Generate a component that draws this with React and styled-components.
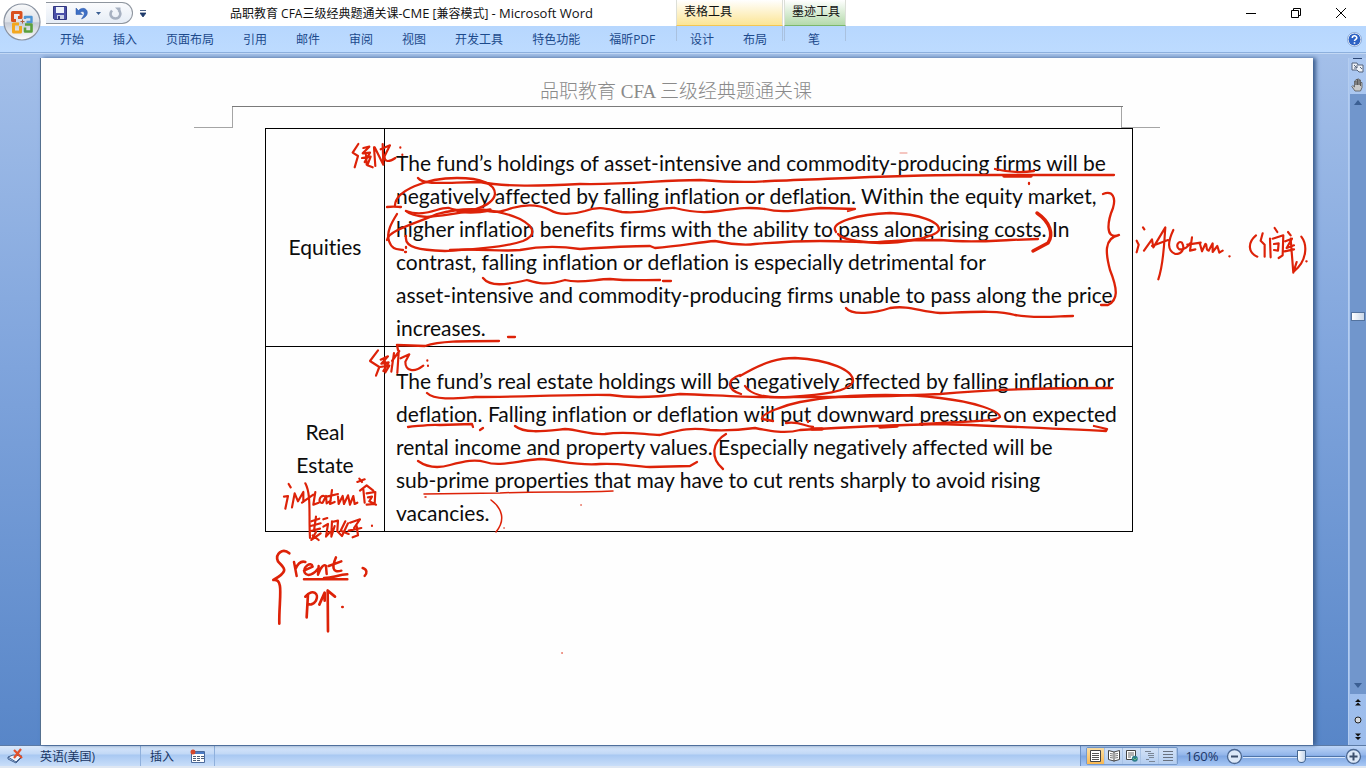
import React from 'react'
import styled, { createGlobalStyle } from 'styled-components'

const GlobalStyle = createGlobalStyle`
* {
  box-sizing: border-box;
}
body {
  margin: 0;
  background: #fff;
  font-family: "Open Sans", "Noto Sans CJK SC", sans-serif;
  font-size: 12px;
}
button {
  border: 0;
  padding: 0;
  background: transparent;
  font: inherit;
  color: inherit;
}
svg {
  display: block;
}
`

const Window = styled.div`
display: flex;
flex-direction: column;
min-height: 100vh;
overflow: hidden;
`

/* ---------- ribbon ---------- */

const Header = styled.header`
display: grid;
grid-template-columns: 46px 630px 107px 1px 62px 1fr;
grid-template-rows: 26px 26px;
background: linear-gradient(#fff 26px, #b7d7fe 26px, #bddbff 100%);
`
const OfficeButton = styled.button`
grid-row: 1 / 3;
padding: 2px 0 0 2px;
align-self: start;
`
const TitleArea = styled.div`
display: flex;
align-items: center;
`
const QuickAccess = styled.div`
display: flex;
align-items: center;
gap: 8px;
width: 87px;
height: 22px;
padding-left: 7px;
border: 1px solid #8e959e;
border-left: 0;
border-radius: 0 11px 11px 0;
background: linear-gradient(#fafbfd, #e6edf6);
`
const MoreButton = styled.button`
margin-left: 7px;
`
const Title = styled.h1`
margin: 0 0 0 84px;
font-size: 12px;
font-weight: 400;
line-height: 26px;
color: #111;
white-space: nowrap;
`
const AppName = styled.span`
font-size: 13px;
`
const ContextLabel = styled.div`
padding-left: 7px;
line-height: 24px;
color: #111;
white-space: nowrap;
border-left: 1px solid #dcdfd8;
border-right: 1px solid #dcdfd8;
border-bottom: 1px solid ${p => p.$edge};
background: linear-gradient(#fff, ${p => p.$tint});
`
const Gap = styled.span``
const WindowButtons = styled.div`
display: flex;
justify-content: flex-end;
align-items: center;
gap: 35px;
padding-right: 20px;
`
const Tabs = styled.nav`
display: flex;
gap: 29px;
padding-left: 14px;
`
const ContextTabs = styled(Tabs)`
padding-left: ${p => p.$pad}px;
border-left: 1px solid #a9c1df;
border-right: 1px solid #a9c1df;
margin-bottom: 11px;
`
const Tab = styled.button`
height: 28px;
line-height: 28px;
color: #1c4a8c;
white-space: nowrap;
`
const HelpArea = styled.div`
display: flex;
justify-content: flex-end;
align-items: center;
padding-right: 4px;
`
const RibbonEdge = styled.div`
height: 6px;
border-top: 1px solid #8db0dd;
background: linear-gradient(#c3d8f4 1px, #a4c0e9 1px);
`

/* ---------- document ---------- */

const Workspace = styled.main`
flex: 1;
display: flex;
background: linear-gradient(#a3bfe9, #7fa4dc 45%, #5886c8);
`
const Sheet = styled.article`
position: relative;
flex: 1;
margin: 0 35px 0 40px;
background: #fefefe;
border-left: 1px solid #55708f;
box-shadow: 3px 0 4px #3d5f8f;
`
const PageHeader = styled.p`
margin: 0 190px 0 191px;
padding: 21px 3px 2px 0;
border-bottom: 1px solid #7a7a7a;
text-align: center;
font-family: "Liberation Serif", "Noto Sans CJK SC", serif;
font-size: 19px;
font-weight: 300;
line-height: 25px;
color: #8a8a8a;
`
const Corners = styled.div`
display: flex;
justify-content: space-between;
padding: 0 153px;
`
const Corner = styled.i`
width: 39px;
height: 21px;
border: solid #a5a5a5;
border-width: ${p => (p.$right ? '0 0 1px 1px' : '0 1px 1px 0')};
`
const TableWrap = styled.div`
padding: 0 180px 0 224px;
`
const DocTable = styled.table`
width: 100%;
table-layout: fixed;
border-collapse: collapse;
font-family: Lato, sans-serif;
font-size: 21px;
font-variant-ligatures: none;
line-height: 33px;
color: #0c0c0c;
`
const RowName = styled.th`
width: 119px;
padding: 17px 12px 0;
border: 1px solid #000;
font-weight: 400;
text-align: center;
`
const RowText = styled.td`
padding: 17px 0 2px 11px;
border: 1px solid #000;
white-space: nowrap;
`
const Ink = styled.svg`
position: absolute;
top: 0;
left: -1px;
pointer-events: none;
fill: none;
stroke: #dd2208;
stroke-width: 2.3px;
stroke-linecap: round;
stroke-linejoin: round;
`

const ScrollColumn = styled.aside`
display: flex;
flex-direction: column;
align-items: center;
width: 18px;
border-left: 1px solid #b4cdf0;
background: linear-gradient(#abc7f0, #9dbdec);
`
const ScrollButton = styled.button`
display: grid;
place-items: center;
width: 17px;
height: ${p => p.$h || 17}px;
`
const Track = styled.div`
flex: 1;
display: flex;
flex-direction: column;
width: 16px;
background: #7196cc;
`
const Spring = styled.div`
flex: ${p => p.$n};
`
const Thumb = styled.div`
height: 9px;
margin: 0 1px;
border: 1px solid #54739f;
background: linear-gradient(90deg, #fff, #c9d6e8);
`

/* ---------- status bar ---------- */

const StatusBar = styled.footer`
display: flex;
align-items: center;
height: 23px;
border-top: 1px solid #5c7ba6;
border-bottom: 2px solid #dfe7f2;
background: linear-gradient(#dbe9fb, #c1d8f6 40%, #a8c8f2 45%, #c9def9);
color: #17355f;
`
const StatusItem = styled.button`
display: flex;
align-items: center;
gap: 16px;
height: 20px;
padding: 0 ${p => p.$right || 9}px 0 ${p => p.$left || 7}px;
border-right: ${p => (p.$line ? '1px solid #8fb0dc' : '0')};
color: #1a3663;
`
const StatusRight = styled.div`
display: flex;
align-items: center;
height: 20px;
margin-left: auto;
padding-left: 5px;
border-left: 1px solid #6d92c6;
background: linear-gradient(#bdd5f7, #92b5ea 45%, #7ea6e2 50%, #a8c8f5);
`
const Views = styled.div`
display: flex;
height: 18px;
border: 1px solid #7699cb;
border-radius: 2px;
`
const ViewButton = styled.button`
display: grid;
place-items: center;
width: 18px;
background: ${p => (p.$active ? 'linear-gradient(#fce0a4, #f9b851)' : 'linear-gradient(#d4e3f7, #b3cdf0)')};
border-right: 1px solid #a9c3e6;
`
const ZoomLabel = styled.button`
width: 48px;
font-size: 13px;
color: #1c3768;
`
const ZoomRange = styled.input`
appearance: none;
width: 102px;
height: 17px;
margin: 0;
background: linear-gradient(transparent 8px, #4f74a9 8px, #4f74a9 9px, #d7e6fb 9px, #d7e6fb 10px, transparent 10px);

&::-webkit-slider-thumb {
  appearance: none;
  width: 9px;
  height: 13px;
  border: 1px solid #44658f;
  border-radius: 1px 1px 5px 5px;
  background: linear-gradient(90deg, #fff, #c6d6ec);
}
`
const RoundButton = styled.button`
padding: 0 ${p => p.$end || 0}px 0 0;
`

const tabs = ['开始', '插入', '页面布局', '引用', '邮件', '审阅', '视图', '开发工具', '特色功能', '福昕PDF']

const OfficeLogo = () => (
  <svg width="42" height="42" viewBox="0 0 42 42">
    <defs>
      <linearGradient id="orb" x1="0" y1="0" x2="0" y2="1">
        <stop offset="0" stopColor="#f9fafb" />
        <stop offset=".5" stopColor="#dde1e8" />
        <stop offset=".52" stopColor="#c4cad5" />
        <stop offset="1" stopColor="#fff" />
      </linearGradient>
    </defs>
    <circle cx="20" cy="20" r="18" fill="url(#orb)" stroke="#8a93a1" strokeWidth="1.2" />
    <g fill="none" strokeWidth="3" strokeLinejoin="round">
      <path d="M14 18.500h-3.500v-8h8.500v5h-3" stroke="#d9501e" />
      <path d="M23 17v-2h6.500v5h-5" stroke="#4f95d4" strokeWidth="2.400" />
      <path d="M17 22h-5.500v8h7v-6" stroke="#f3a71f" />
      <path d="M23 22.500h6.500v7h-6.500v-4" stroke="#5ba03c" strokeWidth="2.600" />
    </g>
    <path d="M20.500 17.500v4M18.500 19.500h4" stroke="#b05f3b" strokeWidth="1" />
  </svg>
)

const SaveIcon = () => (
  <svg width="14" height="14" viewBox="0 0 14 14">
    <path d="M.5.5h13v13h-12l-1-1z" fill="#4a50a8" stroke="#31367f" />
    <path d="M3 1h8v6H3z" fill="#eef3fb" />
    <path d="M4 9h7v4H4z" fill="#c9d1e6" />
    <path d="M5 10h2v3H5z" fill="#31367f" />
  </svg>
)

const UndoIcon = () => (
  <svg width="13" height="13" viewBox="0 0 13 13">
    <path d="M1 1v6.500h6.500L5 5.500c3-2 5-.500 4 2.500L6.500 12c5.500-2 7-6 5-9C9.500.500 6 1 3.500 3.500z" fill="#3e70c6" stroke="#2a55a4" strokeWidth=".5" />
  </svg>
)

const RedoIcon = () => (
  <svg width="13" height="13" viewBox="0 0 13 13">
    <path d="M3 3.500C0 7 2 11.500 6.500 11.500S13 6 9.500 3" fill="none" stroke="#a7b1c1" strokeWidth="2.600" />
    <path d="M6 .5h5.500V6z" fill="#a7b1c1" />
  </svg>
)

const Triangle = ({ up, color = '#3b5f93', w = 8 }) => (
  <svg width={w} height="5" viewBox="0 0 8 5">
    <path d={up ? 'M0 5l4-5 4 5z' : 'M0 0l4 5 4-5z'} fill={color} />
  </svg>
)

const HelpIcon = () => (
  <svg width="15" height="15" viewBox="0 0 15 15">
    <circle cx="7.5" cy="7.5" r="6.500" fill="#2d62c4" stroke="#fff" strokeWidth="1" />
    <circle cx="7.5" cy="7.5" r="7" fill="none" stroke="#5c7fb8" strokeWidth=".6" />
    <path d="M5.300 6c0-3 4.500-2.800 4.500-.3C9.800 7.300 7.500 7.300 7.500 9M7.500 10.300v1.500" fill="none" stroke="#fff" strokeWidth="1.600" />
  </svg>
)

const ZoomSign = ({ plus }) => (
  <svg width="17" height="17" viewBox="0 0 17 17">
    <circle cx="8.500" cy="8.500" r="7" fill="#dce8f8" stroke="#4a6690" strokeWidth="1.300" />
    <path d={plus ? 'M4.500 8.500h8M8.500 4.500v8' : 'M5 8.500h7'} stroke="#3c4f6c" strokeWidth="2" />
  </svg>
)

const viewIcons = [
  <svg key="print" width="11" height="12" viewBox="0 0 11 12"><path d="M.5.5h10v11H.5z" fill="#fff" stroke="#444" /><path d="M2 3.500h7M2 5.500h7M2 7.500h7M2 9.500h7" stroke="#555" /></svg>,
  <svg key="read" width="12" height="12" viewBox="0 0 12 12"><path d="M6 2L.5.500v9L6 11l5.500-1.500v-9z M6 2v9.500" fill="#fff" stroke="#444" /><path d="M2 3.500l3 .5M2 5.500l3 .5M2 7.500l3 .5M7 4l3-.5M7 6l3-.5M7 8l3-.5" stroke="#777" /></svg>,
  <svg key="web" width="12" height="12" viewBox="0 0 12 12"><path d="M.5.500h9v9h-9z" fill="#fff" stroke="#444" /><path d="M2 3h6M2 5h6M2 7h3" stroke="#666" /><circle cx="8.800" cy="8.800" r="3" fill="#2f7f8c" /><path d="M7 8l2 2 2-2" stroke="#6cc07a" fill="none" /></svg>,
  <svg key="outline" width="12" height="12" viewBox="0 0 12 12"><path d="M1 1.500h6M4 3.500h6M4 5.500h6M5 7.500h5M2 9.500h3M5 11.500h6" stroke="#7a8696" /></svg>,
  <svg key="draft" width="12" height="12" viewBox="0 0 12 12"><path d="M1 1.500h10M1 4.500h10M1 7.500h10M1 10.500h10" stroke="#68717f" /></svg>,
]

// freehand pen strokes, in window coordinates
const marks = [
  // Equities
  'M418 178C424 186 450 182 480 182C505 187 540 186 580 184C630 185 660 180 700 180C725 182 745 183 770 181C830 179 900 175 960 175L1114 175',
  'M995 169Q1015 174 1034 171',
  'M387 207C395 206 398 207 401 207M395 205C396 191 425 178 457 178C482 178 495 184 495 194C493 207 470 213 427 217C415 216 408 213 406 211',
  'M406 211C425 218 438 207 449 208C458 212 470 210 484 210C495 214 503 211 512 208C530 203 542 206 550 210C558 215 572 215 585 211C600 205 610 210 622 212C650 214 660 207 675 208C690 212 705 213 718 211C740 208 750 207 765 209C785 214 800 209 820 208L855 209L848 211',
  'M397 214C392 222 386 232 389 241C392 250 397 249 403 250M406 247v1M405 252h1',
  'M387 240C388 230 420 222 437 214C470 205 500 210 520 219C537 228 535 236 523 241C500 249 460 250 445 251C420 250 404 248 406 236',
  'M450 250C480 248 500 252 520 250C540 246 560 246 580 249C610 247 630 246 650 246L655 248C680 246 700 242 715 241C725 243 740 246 755 244C780 242 800 241 820 241C850 241 870 243 880 242C900 240 920 240 940 240C970 243 990 241 1010 240L1038 239',
  'M836 232C828 222 860 214 890 213C920 214 940 222 939 230C935 238 900 243 880 243C860 242 842 240 838 234',
  'M1103 194C1113 190 1116 198 1113 208C1108 220 1104 240 1119 235C1103 238 1106 255 1110 270C1118 290 1118 300 1108 305L1101 305',
  'M483 278C490 287 505 285 527 280C537 283 545 286 565 280C580 284 595 279 610 279C630 281 640 280 660 280M663 281L671 281',
  'M846 308C852 316 875 313 890 308C910 305 920 312 940 313C970 312 1000 310 1015 315C1035 319 1060 316 1073 316',
  'M398 350L397 345L425 346C440 341 460 341 499 341M508 337L515 337M1029 183v1',
  // Real Estate
  'M427 393C435 401 460 398 475 397C520 397 580 394 610 395C630 398 650 398 680 394C710 395 740 397 760 397C800 397 860 398 940 394C980 390 1040 388 1112 388',
  'M740 376C765 361 780 358 795 358C830 360 853 370 853 381C850 392 820 395 790 397C765 399 750 394 745 386M740 375C726 380 727 390 741 394',
  'M408 427C420 426 430 424 440 425L472 424L473 427M480 430l3-2',
  'M515 426C525 434 545 431 565 429C580 430 590 435 605 434C625 431 640 434 660 435C680 430 690 427 710 430C730 431 740 430 755 428C770 431 785 434 800 430C850 427 900 425 940 424C980 425 1040 428 1106 431L1107 429L1094 426',
  'M786 423C800 421 803 426 813 427M808 421v1',
  'M773 421L762 419C760 414 785 405 800 402C840 394 900 393 940 398C975 402 1000 411 1000 417C995 422 970 421 920 424',
  'M418 461C428 468 440 468 450 465C465 461 475 459 485 462C500 467 515 461 540 459C560 460 575 466 600 464C620 463 630 466 650 467L690 466L697 462',
]
const boldMarks = [
  'M1004 176L1031 176',
  'M458 211C470 213 480 212 490 210',
  'M1037 213C1050 222 1054 234 1048 243L1033 251',
  'M812 429L822 429M880 427L897 426',
]
const thinMarks = [
  'M424 494L500 493C540 491 570 493 613 491M425 497h1',
  'M491 500C502 508 506 520 496 532',
  'M562 653h.1M581 505h.1M504 528h.1',
]

const InkLayer = () => (
  <Ink width="1326" height="687" viewBox="40 58 1326 687" aria-hidden="true">
    {marks.map(d => <path key={d} d={d} />)}
    {boldMarks.map(d => <path key={d} d={d} strokeWidth="3.500" />)}
    {thinMarks.map(d => <path key={d} d={d} style={{ strokeWidth: 1.5 }} />)}
    <path d="M900 153h7" opacity=".5" style={{ strokeWidth: 1 }} />
    <path d="M726 434C712 442 710 458 723 469" />

    {/* side notes are written at three times the size */}
    <g transform="translate(340 130) scale(.3333)" style={{ strokeWidth: 6.5 }}>
      <path d="M55 42L38 68L54 78L44 112M70 54L88 50L68 70L90 68L74 96M66 84L92 80L82 106L98 112M78 70L80 104M102 52L106 108M104 52L130 104L128 42M122 58L150 46L134 78C132 98 148 96 166 84M181 52v1M187 74v1" />
    </g>
    <g transform="translate(1090 180) scale(.3333)" style={{ strokeWidth: 6.5 }}>
      <path d="M159 142l4 6M140 182L146 194L140 217M162 212L186 178L190 202L226 142C222 190 222 248 205 298M186 198L234 180M250 150C234 184 230 212 256 222C276 222 286 206 276 188C264 180 256 200 268 208C284 210 296 198 300 190M306 172L300 212L316 208M292 194L332 188M330 192L336 214L346 192C352 190 346 212 356 212L368 190L368 216L382 198L388 218L398 212M418 229h1" />
      <path d="M498 166C472 188 474 218 502 230M518 160L512 182L524 194L524 230M540 176L542 232M554 144L562 156M548 176L580 166L578 226L566 234M552 192L566 190L564 212L552 210M594 156L602 166M586 184L606 176L590 204L612 196M584 214L612 208M602 176L610 278L620 246M634 170C654 196 650 244 612 274M649 244h1" />
    </g>
    <g transform="translate(340 345) scale(.3333)" style={{ strokeWidth: 6.5 }}>
      <path d="M114 16L90 48L118 66L108 92M122 44L144 34L124 56L146 52L130 78M120 66L148 62L136 82M134 40L136 78M162 24L154 80M156 48L178 18M176 22L172 84M182 40L208 28L196 50C196 78 222 84 250 62M262 46v1M264 62v1" />
    </g>
    <g transform="translate(250 470) scale(.3333)" style={{ strokeWidth: 6.5 }}>
      <path d="M116 42l6 10M102 80L114 78L106 116M126 112L134 70L144 94L160 66L160 96M166 40C184 74 176 128 180 204M156 98L190 74M196 66L190 104L206 98M222 78C206 76 204 102 218 98L228 78L230 100L242 92M246 60L240 102L254 96M230 80L264 72M264 80L266 102L278 78L282 102L294 76L300 104L310 78L314 102L322 98M328 26L336 36M322 36L344 28M330 62L350 46L370 62M340 58L344 98M350 70L376 66L374 102L350 104M354 82L366 80L358 94L378 104" />
      <path d="M184 154L208 146M182 168L212 160M198 140L192 182M180 184L210 176M198 186L184 210L212 190M188 196L206 210M220 148L232 144M220 170L234 162L228 200L240 186M246 154L244 196M246 156L264 152L262 182M254 168L244 200M262 184L276 198M286 154L272 182L296 192M294 160L276 198M300 158L330 148L312 174M320 168L324 196L308 202M296 182L334 174M366 167v1" />
      <path d="M118 250C98 232 74 252 84 274C98 292 124 300 70 330C104 324 86 390 88 461" style={{ strokeWidth: 8 }} />
      <path d="M132 276L140 318M137 296C144 280 154 272 166 276M162 302L188 290C184 272 158 290 164 308C172 322 194 312 204 296M206 288L204 314C212 290 222 282 228 288L230 312M258 262C246 290 246 310 274 302M236 288L274 274M162 328L292 328M222 324C250 324 264 314 292 313M338 294C352 298 352 310 344 318" style={{ strokeWidth: 7.5 }} />
      <path d="M174 372L170 442M166 380C190 354 208 372 198 392C192 402 182 406 174 402M233 362L234 484M208 404L224 368L224 392M233 362L255 380M277 411h1" style={{ strokeWidth: 8 }} />
    </g>
  </Ink>
)

export default function App() {
  return (
    <Window>
      <GlobalStyle />
      <Header>
        <OfficeButton type="button" aria-label="Office"><OfficeLogo /></OfficeButton>
        <TitleArea>
          <QuickAccess>
            <button type="button" aria-label="保存"><SaveIcon /></button>
            <button type="button" aria-label="撤消"><UndoIcon /></button>
            <button type="button" aria-label="撤消列表"><Triangle w={5} /></button>
            <button type="button" aria-label="重复"><RedoIcon /></button>
          </QuickAccess>
          <MoreButton type="button" aria-label="自定义">
            <svg width="6" height="7" viewBox="0 0 6 7"><path d="M0 .5h6M0 3l3 4 3-4z" fill="#1f3b6b" stroke="#1f3b6b" strokeWidth=".8" /></svg>
          </MoreButton>
          <Title>品职教育 CFA三级经典题通关课-<AppName>CME</AppName> [兼容模式] <AppName>- Microsoft Word</AppName></Title>
        </TitleArea>
        <ContextLabel $tint="#fce595" $edge="#f4c752">表格工具</ContextLabel>
        <Gap />
        <ContextLabel $tint="#b4daab" $edge="#7cb76b">墨迹工具</ContextLabel>
        <WindowButtons>
          <button type="button" aria-label="最小化">
            <svg width="10" height="10" viewBox="0 0 10 10"><path d="M0 5.500h10" stroke="#000" /></svg>
          </button>
          <button type="button" aria-label="还原">
            <svg width="10" height="10" viewBox="0 0 10 10"><path d="M.5 2.500h7v7h-7zM2.500 2.500v-2h7v7h-2" fill="none" stroke="#000" /></svg>
          </button>
          <button type="button" aria-label="关闭">
            <svg width="10" height="10" viewBox="0 0 10 10"><path d="M0 0l10 10M10 0L0 10" stroke="#000" /></svg>
          </button>
        </WindowButtons>

        <Tabs>
          {tabs.map(name => <Tab type="button" key={name}>{name}</Tab>)}
        </Tabs>
        <ContextTabs $pad={13}>
          <Tab type="button">设计</Tab>
          <Tab type="button">布局</Tab>
        </ContextTabs>
        <Gap />
        <ContextTabs $pad={23}>
          <Tab type="button">笔</Tab>
        </ContextTabs>
        <HelpArea>
          <button type="button" aria-label="帮助"><HelpIcon /></button>
        </HelpArea>
      </Header>
      <RibbonEdge />

      <Workspace>
        <Sheet>
          <PageHeader>品职教育 CFA 三级经典题通关课</PageHeader>
          <Corners>
            <Corner />
            <Corner $right />
          </Corners>
          <TableWrap>
            <DocTable>
              <tbody>
                <tr>
                  <RowName scope="row">Equities</RowName>
                  <RowText>
                    The fund’s holdings of asset-intensive and commodity-producing firms will be<br />
                    negatively affected by falling inflation or deflation. Within the equity market,<br />
                    higher inflation benefits firms with the ability to pass along rising costs. In<br />
                    contrast, falling inflation or deflation is especially detrimental for<br />
                    asset-intensive and commodity-producing firms unable to pass along the price<br />
                    increases.
                  </RowText>
                </tr>
                <tr>
                  <RowName scope="row">Real<br />Estate</RowName>
                  <RowText>
                    The fund’s real estate holdings will be negatively affected by falling inflation or<br />
                    deflation. Falling inflation or deflation will put downward pressure on expected<br />
                    rental income and property values. Especially negatively affected will be<br />
                    sub-prime properties that may have to cut rents sharply to avoid rising<br />
                    vacancies.
                  </RowText>
                </tr>
              </tbody>
            </DocTable>
          </TableWrap>
          <InkLayer />
        </Sheet>

        <ScrollColumn>
          <ScrollButton type="button" $h={18} aria-label="标尺">
            <svg width="13" height="18" viewBox="0 0 13 18">
              <path d="M2 0h9" stroke="#2b4674" strokeWidth="2" />
              <path d="M1 5h5l1 2h5v7H8l-2-2H1z" fill="#eef2f8" stroke="#55637a" />
              <path d="M3 7l3 3M6 7v3H3M9 9l2 2" stroke="#55637a" fill="none" />
            </svg>
          </ScrollButton>
          <ScrollButton type="button" $h={18} aria-label="平移">
            <svg width="13" height="14" viewBox="0 0 13 14">
              <path d="M4 13L.8 8.500l1-1L3.500 9V3h1.500v4V1.500h1.500V7V1H8v6V2h1.500v6V4.500H11v5L9.500 13z" fill="#c9c9c9" stroke="#555" strokeWidth=".8" />
            </svg>
          </ScrollButton>
          <Track>
            <ScrollButton type="button" aria-label="向上"><Triangle up /></ScrollButton>
            <Spring $n={36} />
            <Thumb />
            <Spring $n={64} />
            <ScrollButton type="button" aria-label="向下"><Triangle /></ScrollButton>
          </Track>
          <ScrollButton type="button" aria-label="前一页">
            <svg width="6" height="7" viewBox="0 0 6 7"><path d="M0 3l3-3 3 3zM0 6.500l3-3 3 3z" fill="#111" /></svg>
          </ScrollButton>
          <ScrollButton type="button" aria-label="选择浏览对象">
            <svg width="8" height="8" viewBox="0 0 8 8"><circle cx="4" cy="4" r="3" fill="#d5d9df" stroke="#222" /></svg>
          </ScrollButton>
          <ScrollButton type="button" aria-label="下一页">
            <svg width="6" height="7" viewBox="0 0 6 7"><path d="M0 .5l3 3 3-3zM0 4l3 3 3-3z" fill="#111" /></svg>
          </ScrollButton>
        </ScrollColumn>
      </Workspace>

      <StatusBar>
        <StatusItem type="button" $right={45} $line>
          <svg width="17" height="16" viewBox="0 0 17 16">
            <path d="M1 9l5-2 9 1-6 6z" fill="#eef3fb" stroke="#41608f" />
            <path d="M1 9v2l8 4 6-6" fill="none" stroke="#41608f" />
            <path d="M7 2l8 8M14 1L7 10" stroke="#e2512b" strokeWidth="2.200" />
          </svg>
          英语(美国)
        </StatusItem>
        <StatusItem type="button" $left={9} $line>
          插入
          <svg width="15" height="14" viewBox="0 0 15 14">
            <path d="M1.500 2.500h13v11h-13z" fill="#fff" stroke="#4b6a9c" />
            <path d="M2 3h12v2H2z" fill="#4b7bc4" />
            <path d="M3 7.500h3M7 7.500h3M11 7.500h3M3 9.500h3M7 9.500h3M11 9.500h3M3 11.500h3M7 11.500h3" stroke="#4f5f78" />
            <circle cx="3" cy="3" r="2.500" fill="#d6482b" />
          </svg>
        </StatusItem>
        <StatusRight>
          <Views>
            {viewIcons.map((icon, i) => (
              <ViewButton type="button" key={icon.key} $active={i === 0} aria-label={icon.key}>{icon}</ViewButton>
            ))}
          </Views>
          <ZoomLabel type="button">160%</ZoomLabel>
          <RoundButton type="button" aria-label="缩小"><ZoomSign /></RoundButton>
          <ZoomRange type="range" min="10" max="270" defaultValue="160" aria-label="显示比例" />
          <RoundButton type="button" $end={4} aria-label="放大"><ZoomSign plus /></RoundButton>
        </StatusRight>
      </StatusBar>
    </Window>
  )
}
